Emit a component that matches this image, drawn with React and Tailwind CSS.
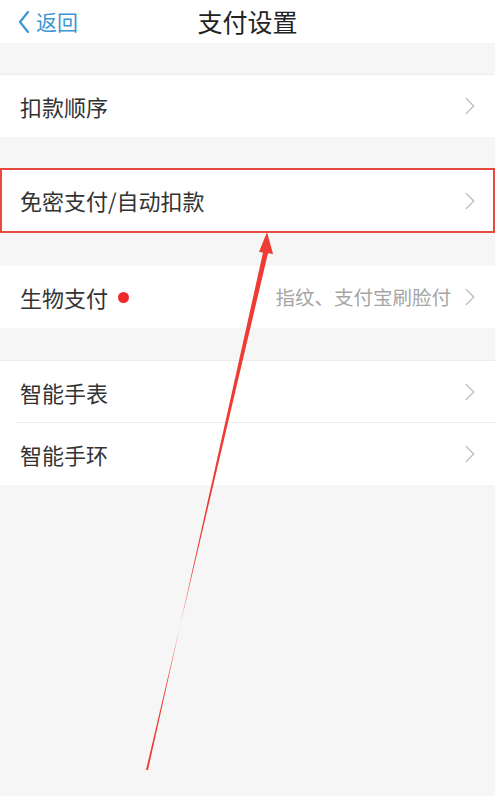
import { ChevronRight } from 'lucide-react';

const font = { fontFamily: '"Noto Sans CJK SC", "Noto Sans", sans-serif' };

function Row({ label, dot, extra, divider }) {
  return (
    <div className="relative flex h-[62px] items-center bg-white pl-[20px] pr-[10px]">
      <span className="text-[22px] text-[#333]">{label}</span>
      {dot && <span className="ml-[10px] mt-[1px] h-[11px] w-[11px] rounded-full bg-[#ee2a2a]" />}
      <span className="flex-1" />
      {extra && <span className="mr-[4px] text-[19.5px] text-[#a6a6a6]">{extra}</span>}
      <ChevronRight className="h-[30px] w-[30px] text-[#c2c2c2]" strokeWidth={1.2} />
      {divider && <div className="absolute bottom-0 left-[16px] right-0 h-px bg-[#ececec]" />}
    </div>
  );
}

export default function App() {
  return (
    <div className="relative h-[796px] w-[495px] overflow-hidden bg-[#f6f6f6]" style={font}>
      {/* header */}
      <div className="relative flex h-[43px] items-center bg-white">
        <div className="flex items-center pl-[17px] text-[#3a97d4]">
          <svg width="14" height="24" viewBox="0 0 14 24" fill="none" stroke="currentColor" strokeWidth="2.2" strokeLinecap="round" strokeLinejoin="round">
            <path d="M11 2 L3 12 L11 22" />
          </svg>
          <span className="ml-[5px] text-[21px]">返回</span>
        </div>
        <div className="absolute inset-x-0 top-0 flex h-full items-center justify-center text-[25px] text-[#222]">
          支付设置
        </div>
      </div>

      <div className="h-[32px] border-b border-[#ececec]" />
      <Row label="扣款顺序" />

      <div className="h-[31px]" />
      <div className="border-2 border-[#e84a42]">
        <div className="flex h-[61px] items-center bg-white pl-[18px] pr-[8px]">
          <span className="text-[22px] text-[#333]">免密支付/自动扣款</span>
          <span className="flex-1" />
          <ChevronRight className="h-[30px] w-[30px] text-[#c2c2c2]" strokeWidth={1.2} />
        </div>
      </div>

      <div className="h-[33px]" />
      <Row label="生物支付" dot extra="指纹、支付宝刷脸付" />

      <div className="h-[33px] border-b border-[#ececec]" />
      <Row label="智能手表" divider />
      <Row label="智能手环" />

      {/* annotation arrow */}
      <svg className="absolute left-0 top-0" width="495" height="796" viewBox="0 0 495 796">
        <polygon points="146,770 148,770 264,248 269,249" fill="#ee3b33" />
        <polygon points="267,232 259,252 273,254" fill="#ee3b33" />
      </svg>
    </div>
  );
}
